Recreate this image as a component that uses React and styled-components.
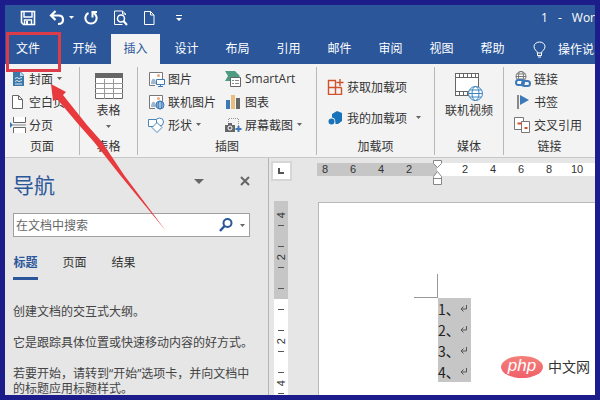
import React, { useState } from "react";
import styled, { createGlobalStyle, css } from "styled-components";

const quickButtons = [
  { id: "save", label: "保存", icon: SaveIcon, width: 29 },
  { id: "undo", label: "撤消", icon: UndoIcon, width: 35 },
  { id: "redo", label: "重复", icon: RedoIcon, width: 30 },
  { id: "preview", label: "打印预览", icon: PreviewIcon, width: 29 },
  { id: "new", label: "新建", icon: NewIcon, width: 33 },
  { id: "more", label: "自定义", icon: MoreIcon, width: 6 },
];

const tabs = [
  "开始",
  "插入",
  "设计",
  "布局",
  "引用",
  "邮件",
  "审阅",
  "视图",
  "帮助",
];

const App = () => {
  const [activeTab, setActiveTab] = useState("插入");
  const [navTab, setNavTab] = useState("标题");

  return (
    <>
      <GlobalStyle />
      <Frame>
        <TitleBar>
          {quickButtons.map(({ id, label, width, icon: QuickIcon }) => (
            <QuickButton key={id} aria-label={label} $width={width}>
              <QuickIcon />
            </QuickButton>
          ))}
          <WindowTitle>
            <span>1</span>
            <span>-</span>
            <span>Wor</span>
          </WindowTitle>
        </TitleBar>

        <TabBar>
          <FileTab>文件</FileTab>
          {tabs.map((tab) => (
            <Tab
              key={tab}
              $active={tab === activeTab}
              onClick={() => setActiveTab(tab)}
            >
              {tab}
            </Tab>
          ))}
          <TellMe>
            <BulbIcon />
            操作说
          </TellMe>
        </TabBar>

        <Ribbon>
          <Group $width={75}>
            <Column>
              <Command icon={<CoverIcon />} text="封面" menu />
              <Command icon={<BlankIcon />} text="空白页" />
              <Command icon={<BreakIcon />} text="分页" />
            </Column>
            <GroupName>页面</GroupName>
          </Group>

          <Group $width={58}>
            <BigCommand>
              <BigIcon>
                <TableIcon />
              </BigIcon>
              <span>表格</span>
              <Caret />
            </BigCommand>
            <GroupName>表格</GroupName>
          </Group>

          <Group $width={179}>
            <Columns>
              <Column $left={10}>
                <Command icon={<PictureIcon />} text="图片" />
                <Command icon={<OnlinePictureIcon />} text="联机图片" />
                <Command icon={<ShapesIcon />} text="形状" menu />
              </Column>
              <Column $left={9}>
                <Command icon={<SmartArtIcon />} text="SmartArt" />
                <Command icon={<ChartIcon />} text="图表" />
                <Command icon={<ScreenshotIcon />} text="屏幕截图" menu />
              </Column>
            </Columns>
            <GroupName>插图</GroupName>
          </Group>

          <Group $width={118}>
            <Column $left={10} $roomy>
              <Command icon={<StoreIcon />} text="获取加载项" />
              <Command icon={<AddinsIcon />} text="我的加载项" menu wide />
            </Column>
            <GroupName>加载项</GroupName>
          </Group>

          <Group $width={69}>
            <BigCommand>
              <BigIcon>
                <VideoIcon />
              </BigIcon>
              <span>联机视频</span>
            </BigCommand>
            <GroupName>媒体</GroupName>
          </Group>

          <Group $width={93} $last>
            <Column $left={10}>
              <Command icon={<LinkIcon />} text="链接" />
              <Command icon={<BookmarkIcon />} text="书签" />
              <Command icon={<CrossRefIcon />} text="交叉引用" />
            </Column>
            <GroupName>链接</GroupName>
          </Group>
        </Ribbon>

        <Workspace>
          <NavPane>
            <NavHeader>
              <h2>导航</h2>
              <PaneButton aria-label="任务窗格选项">
                <svg width="10" height="5" viewBox="0 0 10 5">
                  <path d="M0 0h10L5 5z" fill="#666" />
                </svg>
              </PaneButton>
              <PaneButton aria-label="关闭">
                <svg width="10" height="10" viewBox="0 0 10 10">
                  <path d="M1 1l8 8M9 1L1 9" stroke="#666" strokeWidth="2" />
                </svg>
              </PaneButton>
            </NavHeader>
            <SearchBox>
              <input aria-label="在文档中搜索" placeholder="在文档中搜索" />
              <button aria-label="搜索">
                <SearchIcon />
              </button>
              <button aria-label="搜索选项">
                <Caret />
              </button>
            </SearchBox>
            <NavTabs>
              {["标题", "页面", "结果"].map((tab) => (
                <NavTab
                  key={tab}
                  $active={tab === navTab}
                  onClick={() => setNavTab(tab)}
                >
                  {tab}
                </NavTab>
              ))}
            </NavTabs>
            <NavHelp>
              <p>创建文档的交互式大纲。</p>
              <p>它是跟踪具体位置或快速移动内容的好方式。</p>
              <p>若要开始，请转到“开始”选项卡，并向文档中的标题应用标题样式。</p>
            </NavHelp>
          </NavPane>

          <RulerColumn>
            <TabStop aria-label="制表符">
              <svg width="6" height="6" viewBox="0 0 6 6">
                <path d="M1 0v5h5" fill="none" stroke="#555" strokeWidth="2" />
              </svg>
            </TabStop>
            <VerticalRuler>
              <VerticalMargin>
                <VerticalMark number="4" first />
                <VerticalMark number="2" />
                <HalfMark>
                  <Tick />
                </HalfMark>
              </VerticalMargin>
              <VerticalBody>
                <HalfMark>
                  <Tick />
                </HalfMark>
                <VerticalMark number="2" />
                <VerticalMark number="4" />
              </VerticalBody>
            </VerticalRuler>
          </RulerColumn>

          <DocumentArea>
            <HorizontalRuler>
              <RulerMargin>
                {[8, 6, 4, 2].map((n) => (
                  <span key={n}>{n}</span>
                ))}
              </RulerMargin>
              <RulerBody>
                {[2, 4, 6, 8, 10].map((n) => (
                  <span key={n}>{n}</span>
                ))}
              </RulerBody>
              <Indent />
            </HorizontalRuler>
            <Page>
              <MarginCorner />
              <Lines>
                {[1, 2, 3, 4].map((n) => (
                  <Line key={n} $selected>
                    {n}、<ReturnMark />
                  </Line>
                ))}
                <Line $after>5、</Line>
              </Lines>
            </Page>
          </DocumentArea>
        </Workspace>

        <Watermark>
          <PhpBadge>php</PhpBadge>
          中文网
        </Watermark>
        <Highlight />
        <ArrowIcon />
      </Frame>
    </>
  );
};

export default App;

const Command = ({ icon, text, menu, wide }) => (
  <CommandButton $wide={wide}>
    {icon}
    <span>{text}</span>
    {menu && <Caret />}
  </CommandButton>
);

const VerticalMark = ({ number, first }) => (
  <VerticalCell>
    <Tick $hidden={first} />
    <span>{number}</span>
    <Tick />
  </VerticalCell>
);

const Caret = () => (
  <svg className="caret" width="5" height="3" viewBox="0 0 5 3">
    <path d="M0 0h5L2.5 3z" fill="#666" />
  </svg>
);

function SaveIcon() {
  return (
    <svg width="16" height="16" viewBox="0 0 16 16" fill="none" stroke="#fff">
      <path d="M1.5 1.5h13v13h-11l-2-2z" strokeWidth="1.6" />
      <path d="M4 1.5v5.5h8V1.5" strokeWidth="1.4" />
      <path d="M4.5 14.5V10h7v4.5" strokeWidth="1.4" />
      <path d="M6 11h2v3.5H6z" fill="#fff" stroke="none" />
    </svg>
  );
}

function UndoIcon() {
  return (
    <svg width="26" height="16" viewBox="0 0 26 16">
      <path
        d="M6.500 1L2 5.500 6.500 10M2 5.500h7.500c3 0 4.500 2 4.500 4.200s-1.500 4.300-5 4.300"
        fill="none"
        stroke="#fff"
        strokeWidth="2.2"
      />
      <path d="M20 6h5l-2.500 3z" fill="#fff" />
    </svg>
  );
}

function RedoIcon() {
  return (
    <svg width="14" height="16" viewBox="0 0 14 16" fill="none" stroke="#fff">
      <path d="M4.500 3a5.600 5.600 0 1 0 5 0" strokeWidth="2" />
      <path d="M8.500 7.500V2H13" strokeWidth="2" />
    </svg>
  );
}

function PreviewIcon() {
  return (
    <svg width="14" height="16" viewBox="0 0 14 16" fill="none" stroke="#fff">
      <path d="M11.500 5V4l-3-3h-8v13.500h8M8.500 1v3h3" />
      <circle cx="7" cy="8.500" r="3.500" strokeWidth="1.500" />
      <path d="M9.500 11l3.500 4" strokeWidth="2" />
    </svg>
  );
}

function NewIcon() {
  return (
    <svg width="12" height="16" viewBox="0 0 12 16" fill="none" stroke="#fff">
      <path d="M1.500 1.500h6l3.500 3.500v9.500H1.500zM7.500 1.500V5H11" />
    </svg>
  );
}

function MoreIcon() {
  return (
    <svg width="6" height="6" viewBox="0 0 6 6">
      <path d="M0 0h6v1H0zM0 3h6L3 6z" fill="#fff" />
    </svg>
  );
}

const BulbIcon = () => (
  <svg width="13" height="17" viewBox="0 0 13 17" fill="none" stroke="#fff">
    <path d="M4.500 12c0-2-3.500-3-3.500-6.500C1 3 3.500 1 6.500 1S12 3 12 5.500C12 9 8.500 10 8.500 12z" />
    <path d="M4.500 12v2.500h4V12M5 16h3" />
  </svg>
);

const CoverIcon = () => (
  <svg width="16" height="16" viewBox="0 0 16 16">
    <path d="M3 1h8l3 3v11H3z" fill="#3d79a8" />
    <path d="M10 1v4h4z" fill="#c5d9e8" />
    <path
      d="M5 7.500l2-1 2 1 3-1M5 10.500l2-1 2 1 3-1M5 13h7"
      fill="none"
      stroke="#d9e8f3"
    />
  </svg>
);

const BlankIcon = () => (
  <svg width="16" height="16" viewBox="0 0 16 16">
    <path
      d="M2.500 1.500h6l4 4v9h-10zM8.500 1.500v4h4"
      fill="#fff"
      stroke="#666"
    />
  </svg>
);

const BreakIcon = () => (
  <svg width="16" height="16" viewBox="0 0 16 16">
    <path
      d="M3.500 0v5.500h12V0M3.500 16v-5.500h12V16"
      fill="#fff"
      stroke="#666"
    />
    <path d="M3 8h13" stroke="#888" />
    <path d="M0 5v6l3-3z" fill="#3d79b8" />
  </svg>
);

const TableIcon = () => (
  <svg width="28" height="26" viewBox="0 0 28 26">
    <path d="M.5.5h27v25H.5z" fill="#fff" stroke="#666" />
    <path d="M0 0h28v5H0z" fill="#666" />
    <path
      d="M0 10.500h28M0 15.500h28M0 20.500h28M9.500 6v20M18.500 6v20"
      stroke="#999"
    />
  </svg>
);

const Photo = () => (
  <>
    <path d="M1.500 14.500V1.500h13V8" fill="#fff" stroke="#777" />
    <path d="M1.500 14.500H7" stroke="#777" />
    <circle cx="10.500" cy="4.500" r="1.500" fill="#e8a87c" />
    <path d="M3 13c0-7 5-7 5 0z" fill="#9fb6cf" />
  </>
);

const PictureIcon = () => (
  <svg width="17" height="16" viewBox="0 0 17 16">
    <Photo />
    <path d="M8.500 8.500h8v5h-8z" fill="#fff" stroke="#3d79b8" />
    <path d="M12.500 13v2M10 15.500h5" stroke="#3d79b8" />
  </svg>
);

const Globe = ({ cx, cy, r, color }) => (
  <g fill="none" stroke={color}>
    <circle cx={cx} cy={cy} r={r} fill="#fff" />
    <ellipse cx={cx} cy={cy} rx={r / 2} ry={r} />
    <path d={`M${cx - r} ${cy}h${2 * r}`} />
    <path
      d={`M${cx - r * 0.85} ${cy - r / 2}h${r * 1.7}M${cx - r * 0.85} ${
        cy + r / 2
      }h${r * 1.7}`}
    />
  </g>
);

const OnlinePictureIcon = () => (
  <svg width="17" height="16" viewBox="0 0 17 16">
    <Photo />
    <Globe cx={12} cy={11} r={4} color="#3d79b8" />
  </svg>
);

const ShapesIcon = () => (
  <svg width="17" height="16" viewBox="0 0 17 16" fill="#fff" stroke="#4a86b8">
    <circle cx="11.500" cy="5" r="4" />
    <path d="M.5 2.500h8v7h-8z" />
    <path d="M9 5.500l5 5-5 5-5-5z" />
  </svg>
);

const SmartArtIcon = () => (
  <svg width="17" height="16" viewBox="0 0 17 16">
    <path d="M0 0h10l5 5-2 2H5v3H0l3-5z" fill="#4d9b80" />
    <path d="M5.500 6.500h10v9h-10z" fill="#fff" stroke="#666" />
    <path d="M7 9.500h2m1 0h4M7 12.500h2m1 0h4" stroke="#888" />
  </svg>
);

const ChartIcon = () => (
  <svg width="17" height="16" viewBox="0 0 17 16">
    <path d="M1 6h4v9H1z" fill="#3d79b8" />
    <path d="M6 1h4v14H6z" fill="#e9bd7d" />
    <path d="M11 4h4v11h-4z" fill="#666" />
  </svg>
);

const ScreenshotIcon = () => (
  <svg width="17" height="16" viewBox="0 0 17 16">
    <path
      d="M3.500 7V1.500h10V9"
      fill="none"
      stroke="#999"
      strokeDasharray="1 1"
    />
    <path d="M0 8h3V6h4v2h3v7H0z" fill="#666" />
    <circle cx="5" cy="11" r="2" fill="#666" stroke="#fff" />
    <path d="M13.500 9v6M10.500 12h6" stroke="#3d79b8" strokeWidth="2" />
  </svg>
);

const StoreIcon = () => (
  <svg width="17" height="16" viewBox="0 0 17 16">
    <path
      d="M9 1.500H1.500v14h13V8.500M1.500 8.500h13M8.500 1.500v14M13 0v7M9.500 3.500h7"
      fill="none"
      stroke="#d0512c"
      strokeWidth="1.4"
    />
  </svg>
);

const AddinsIcon = () => (
  <svg width="17" height="16" viewBox="0 0 17 16">
    <path d="M10 1l5 2v8l-4 3H8.500c0-5-1-6-3.500-6.500V4z" fill="#1873bb" />
    <circle cx="4.500" cy="11.500" r="3" fill="#1873bb" />
  </svg>
);

const VideoIcon = () => (
  <svg width="28" height="28" viewBox="0 0 28 28">
    <path d="M.5.5h23v22H.5z" fill="#fff" stroke="#666" />
    <path d="M0 2.500h24M0 20.500h24" stroke="#666" strokeWidth="5" />
    <path
      d="M1 2.500h22M1 20.500h22"
      stroke="#fff"
      strokeWidth="3"
      strokeDasharray="3 1"
    />
    <Globe cx={20.5} cy={20.5} r={7} color="#3d86c0" />
  </svg>
);

const LinkIcon = () => (
  <svg width="17" height="16" viewBox="0 0 17 16">
    <Globe cx={7} cy={5.5} r={5} color="#777" />
    <g fill="#fff" stroke="#3d79b8" strokeWidth="2">
      <rect x="2" y="9" width="8" height="5" rx="2.500" />
      <rect x="8" y="10" width="8" height="5" rx="2.500" fill="none" />
    </g>
  </svg>
);

const BookmarkIcon = () => (
  <svg width="17" height="16" viewBox="0 0 17 16">
    <path d="M4 1v14" stroke="#666" strokeWidth="1.500" />
    <path d="M6 1l9 5-9 5z" fill="#3d79b8" />
  </svg>
);

const CrossRefIcon = () => (
  <svg width="17" height="16" viewBox="0 0 17 16">
    <path d="M.5.5h9v12h-9z" fill="#fff" stroke="#777" />
    <path d="M7.500 4.500h8v11h-8z" fill="#fff" stroke="#777" />
    <path d="M3.500 6.500h4M10.500 11h3" stroke="#d0512c" strokeWidth="2" />
  </svg>
);

const SearchIcon = () => (
  <svg width="14" height="14" viewBox="0 0 14 14" fill="none" stroke="#2b579a">
    <circle cx="8.500" cy="5" r="4" strokeWidth="2" />
    <path d="M5.500 8L1 13" strokeWidth="2.500" />
  </svg>
);

const ReturnMark = () => (
  <svg width="8" height="7" viewBox="0 0 8 7">
    <path d="M6.500 0v4H1M3.500 1.500L1 4l2.500 2.500" fill="none" stroke="#555" />
  </svg>
);

const Indent = () => (
  <IndentMarker width="9" height="25" viewBox="0 0 9 25">
    <g fill="#fff" stroke="#888">
      <path d="M.5.5h8v3l-4 4-4-4z" />
      <path d="M.5 24.500v-8l4-5 4 5v8zM.5 18.500h8" />
    </g>
  </IndentMarker>
);

const ArrowIcon = () => (
  <Arrow width="120" height="150" viewBox="0 0 120 150">
    <path
      d="M1 0l15 8-3 3 24 30 15 17 22 33 42 56-46-56-26-33-15-17L7 15l-4 2z"
      fill="#e8393c"
    />
  </Arrow>
);

const GlobalStyle = createGlobalStyle`
  * {
    box-sizing: border-box;
  }

  body {
    margin: 0;
    font-family: "Open Sans", "Noto Sans CJK SC", sans-serif;
    font-size: 12px;
    color: #333;
  }

  button,
  input {
    padding: 0;
    border: 0;
    background: none;
    font: inherit;
    color: inherit;
  }

  svg {
    display: block;
    flex: none;
  }

  h2,
  p {
    margin: 0;
  }
`;

const Frame = styled.div`
  position: relative;
  display: flex;
  flex-direction: column;
  height: 100vh;
  border: 5px solid #1c1c8a;
  background: #e6e6e6;
  overflow: hidden;
`;

const TitleBar = styled.header`
  display: flex;
  align-items: center;
  height: 29px;
  flex: none;
  padding: 0 0 4px 15px;
  background: #2b579a;
  color: #fff;
`;

const QuickButton = styled.button`
  width: ${({ $width }) => $width}px;
  flex: none;
`;

const WindowTitle = styled.span`
  display: flex;
  gap: 10px;
  flex: none;
  margin-left: auto;
`;

const TabBar = styled.nav`
  display: flex;
  gap: 2px;
  height: 30px;
  flex: none;
  background: #2b579a;
`;

const Tab = styled.button`
  width: 49px;
  flex: none;
  padding-bottom: 2px;
  color: ${({ $active }) => ($active ? "#2b579a" : "#fff")};
  background: ${({ $active }) => ($active ? "#f3f3f3" : "none")};
`;

const FileTab = styled(Tab)`
  width: 53px;
  padding-left: 11px;
  text-align: left;
`;

const TellMe = styled.button`
  display: flex;
  align-items: center;
  gap: 12px;
  flex: none;
  margin-left: 14px;
  color: #fff;
`;

const Ribbon = styled.section`
  display: flex;
  flex: none;
  padding: 3px 0 2px;
  border-bottom: 1px solid #c8c8c8;
  background: #f3f3f3;
`;

const Group = styled.div`
  display: flex;
  flex-direction: column;
  justify-content: space-between;
  height: 88px;
  flex: ${({ $width, $last }) => ($last ? "1 0 0" : `0 0 ${$width}px`)};
  border-right: ${({ $last }) => ($last ? "0" : "1px solid #b8b8b8")};
`;

const GroupName = styled.div`
  height: 17px;
  line-height: 17px;
  text-align: center;
`;

const Columns = styled.div`
  display: flex;
`;

const Column = styled.div`
  display: flex;
  flex-direction: column;
  gap: ${({ $roomy }) => ($roomy ? "8px" : "0")};
  padding-top: ${({ $roomy }) => ($roomy ? "8px" : "0")};
  padding-left: ${({ $left }) => $left || 5}px;
`;

const CommandButton = styled.button`
  display: flex;
  align-items: center;
  gap: 3px;
  height: 23px;
  white-space: nowrap;

  .caret {
    margin-left: ${({ $wide }) => ($wide ? "6px" : "1px")};
  }
`;

const BigCommand = styled.button`
  display: flex;
  flex-direction: column;
  align-items: center;
  padding-top: 6px;
  line-height: 16px;
  white-space: nowrap;

  .caret {
    margin-top: 6px;
  }
`;

const BigIcon = styled.span`
  height: 30px;
`;

const Workspace = styled.main`
  display: flex;
  flex: 1;
  min-height: 0;
`;

const NavPane = styled.aside`
  display: flex;
  flex-direction: column;
  flex: none;
  width: 264px;
  padding: 12px 18px 0 8px;
  border-right: 1px solid #b4b4b4;
`;

const NavHeader = styled.div`
  display: flex;
  gap: 36px;
  height: 43px;
  flex: none;

  h2 {
    margin-right: auto;
    font-size: 21px;
    font-weight: 400;
    line-height: 30px;
    color: #2b579a;
  }
`;

const PaneButton = styled.button`
  display: flex;
  align-items: center;
  height: 22px;
`;

const SearchBox = styled.div`
  display: flex;
  align-items: center;
  gap: 7px;
  height: 24px;
  flex: none;
  padding: 0 4px 0 2px;
  border: 1px solid #a0a0a0;
  background: #fff;

  input {
    flex: 1;
    min-width: 0;
    outline: none;
  }

  input::placeholder {
    color: #666;
  }
`;

const NavTabs = styled.div`
  display: flex;
  gap: 24px;
  margin-top: 16px;
`;

const NavTab = styled.button`
  width: 25px;
  height: 27px;
  padding-bottom: 4px;
  line-height: 18px;
  border-bottom: 3px solid transparent;

  ${({ $active }) =>
    $active &&
    css`
      color: #2b579a;
      font-weight: 700;
      border-color: #2b579a;
    `}
`;

const NavHelp = styled.div`
  display: flex;
  flex-direction: column;
  gap: 16px;
  margin-top: 24px;
  margin-right: -8px;
  line-height: 15px;
  color: #444;
`;

const RulerColumn = styled.div`
  display: flex;
  flex-direction: column;
  align-items: center;
  flex: none;
  width: 24px;
  padding-top: 3px;
`;

const TabStop = styled.button`
  display: flex;
  align-items: center;
  justify-content: center;
  width: 21px;
  height: 20px;
  flex: none;
  border: 2px solid #d6d6d6;
  background: #fff;
`;

const VerticalRuler = styled.div`
  display: flex;
  flex-direction: column;
  flex: 1;
  min-height: 0;
  width: 14px;
  margin-top: 20px;
  font-family: "Liberation Sans", sans-serif;
  font-size: 11px;
`;

const VerticalMargin = styled.div`
  display: flex;
  flex-direction: column;
  justify-content: flex-end;
  flex: none;
  height: 98px;
  background: #c6c6c6;
  overflow: hidden;
`;

const VerticalBody = styled.div`
  flex: 1;
  min-height: 0;
  background: #fff;
  overflow: hidden;
`;

const VerticalCell = styled.div`
  display: flex;
  flex-direction: column;
  align-items: center;
  justify-content: space-between;
  flex: none;
  height: 42px;
  padding: 10px 0;

  span {
    line-height: 12px;
    writing-mode: vertical-rl;
    transform: rotate(180deg);
  }
`;

const HalfMark = styled.div`
  display: flex;
  align-items: center;
  justify-content: center;
  flex: none;
  height: 21px;
`;

const Tick = styled.i`
  width: 6px;
  height: 1px;
  background: ${({ $hidden }) => ($hidden ? "none" : "#555")};
`;

const DocumentArea = styled.div`
  display: flex;
  flex-direction: column;
  flex: 1;
  min-width: 0;
  padding-left: 24px;
`;

const HorizontalRuler = styled.div`
  position: relative;
  display: flex;
  height: 13px;
  flex: none;
  margin-top: 5px;
  font-family: "Liberation Sans", sans-serif;
  font-size: 11px;
  line-height: 13px;
  text-align: center;

  span {
    width: 28px;
    flex: none;
  }
`;

const RulerMargin = styled.div`
  display: flex;
  justify-content: flex-end;
  flex: none;
  width: 120px;
  padding-right: 14px;
  background: #c6c6c6;
  overflow: hidden;
`;

const RulerBody = styled.div`
  display: flex;
  flex: 1;
  min-width: 0;
  padding-left: 14px;
  background: #fff;
  overflow: hidden;
`;

const IndentMarker = styled.svg`
  position: absolute;
  top: -3px;
  left: 116px;
`;

const Page = styled.article`
  flex: 1;
  min-height: 0;
  margin-top: 26px;
  margin-left: 1px;
  padding: 71px 0 0 95px;
  border: 1px solid #b8b8b8;
  border-width: 1px 0 0 1px;
  background: #fff;
  overflow: hidden;
`;

const MarginCorner = styled.div`
  width: 24px;
  height: 24px;
  border: 1px solid #999;
  border-width: 0 1px 1px 0;
`;

const Lines = styled.div`
  display: flex;
  flex-direction: column;
  align-items: flex-start;
  padding-left: 24px;
`;

const Line = styled.p`
  display: flex;
  align-items: center;
  width: 33px;
  height: 21px;
  margin-top: ${({ $after }) => ($after ? "8px" : "0")};
  font-family: "Noto Sans CJK SC", sans-serif;
  font-size: 14px;
  color: #222;
  background: ${({ $selected }) => ($selected ? "#c6c6c6" : "none")};
`;

const Watermark = styled.div`
  position: absolute;
  right: 5px;
  bottom: 17px;
  display: flex;
  align-items: center;
  gap: 5px;
  font-size: 14px;
  line-height: 22px;
`;

const PhpBadge = styled.span`
  width: 42px;
  height: 22px;
  border-radius: 50%;
  background: linear-gradient(#f4807a, #f0606a);
  color: #fff;
  font-family: "Liberation Sans", sans-serif;
  font-size: 17px;
  font-style: italic;
  line-height: 19px;
  text-align: center;
`;

const Highlight = styled.div`
  position: absolute;
  top: 27px;
  left: 1px;
  width: 55px;
  height: 40px;
  border: 3px solid #dc3c4a;
`;

const Arrow = styled.svg`
  position: absolute;
  top: 79px;
  left: 45px;
  pointer-events: none;
`;
